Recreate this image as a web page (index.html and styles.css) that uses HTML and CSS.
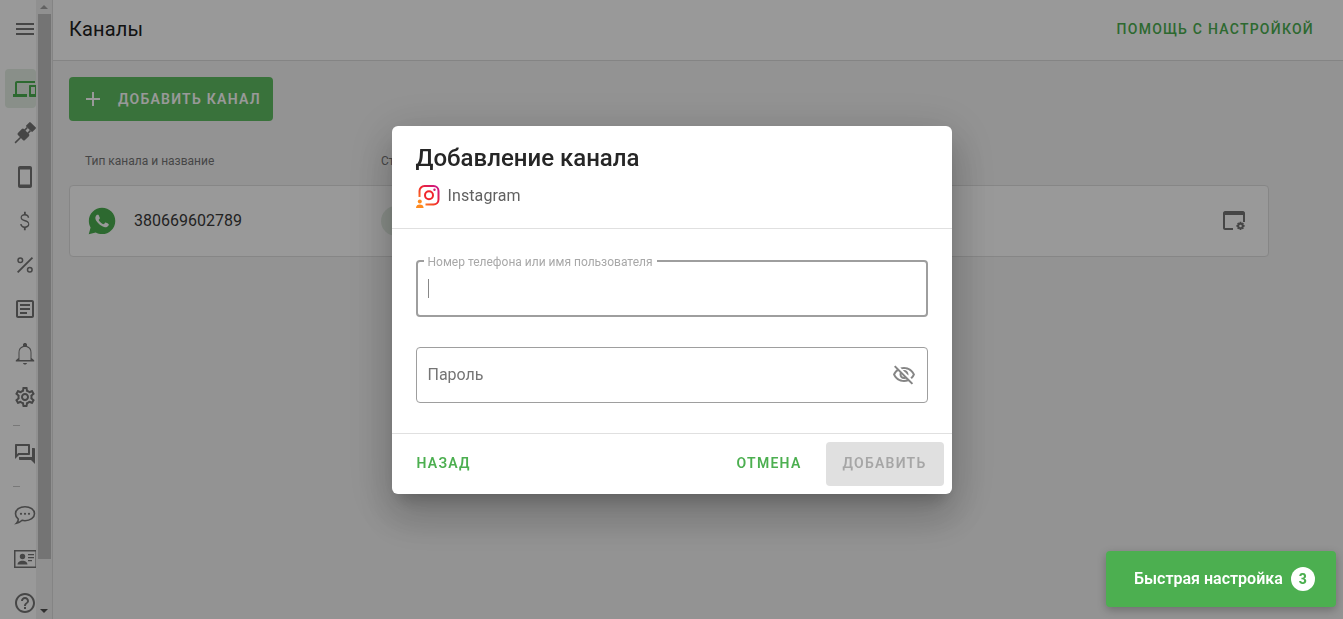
FILE: index.html
```html
<!DOCTYPE html>
<html>
	<head>
		<meta charset="utf-8">
		<title>Каналы</title>
		<link rel="stylesheet" href="styles.css">
	</head>
	<body>
		<div class="page">
			<div class="sidebar">
				<div class="nav">
					<div class="nav-menu">
						<svg class="ico" viewBox="0 0 24 24"><path d="M3 18h18v-2H3v2zm0-5h18v-2H3v2zm0-7v2h18V6H3z"/></svg>
					</div>
					<div class="nav-item nav-item-active">
						<svg class="ico" viewBox="0 0 24 24"><path d="M4 6h18V4H4c-1.1 0-2 .9-2 2v11H0v3h14v-3H4V6zm19 2h-6c-.55 0-1 .45-1 1v10c0 .55.45 1 1 1h6c.55 0 1-.45 1-1V9c0-.55-.45-1-1-1zm-1 9h-4v-7h4v7z"/></svg>
					</div>
					<div class="nav-item">
						<svg class="ico" viewBox="0 0 24 24"><g transform="rotate(45 12 12)"><rect x="7.500" y="0.500" width="9" height="6" rx="1"/><rect x="9" y="6.500" width="1.600" height="4"/><rect x="13.400" y="6.500" width="1.600" height="4"/><rect x="7" y="10" width="10" height="8.500" rx="1.500"/><rect x="11.200" y="18" width="1.600" height="8"/></g></svg>
					</div>
					<div class="nav-item">
						<svg class="ico" viewBox="0 0 24 24"><path d="M17 1H7C5.900 1 5 1.900 5 3v18c0 1.100.9 2 2 2h10c1.100 0 2-.9 2-2V3c0-1.100-.9-2-2-2zm0 18.500H7v-15h10v15z"/></svg>
					</div>
					<div class="nav-item">
						<svg class="ico" viewBox="0 0 24 24"><path d="M12.200 10.900c-2.300-.6-3.400-1.200-3.400-2.400 0-1.100 1-2 2.900-2 2 0 2.900.9 3 2.300h1.500c-.1-1.900-1.300-3.300-3.400-3.700V2.800h-1.800v2.300c-2 .4-3.400 1.700-3.400 3.500 0 2.200 1.800 3.100 4.300 3.800 2.600.7 3.300 1.500 3.300 2.700 0 1.200-1 2.300-3.200 2.300-2.200 0-3.200-1-3.300-2.400H7.200c.1 2.200 1.700 3.500 3.700 3.900v2.400h1.800v-2.400c2.100-.4 3.600-1.600 3.600-3.700 0-2.700-2.200-3.600-4.100-4.100z"/></svg>
					</div>
					<div class="nav-item">
						<svg class="ico" viewBox="0 0 24 24"><path d="M18.800 4l1.300 1.300L5.300 20.100 4 18.800 18.800 4z"/><circle class="ico-line" cx="7.300" cy="7.300" r="2.300"/><circle class="ico-line" cx="16.800" cy="16.800" r="2.300"/></svg>
					</div>
					<div class="nav-item">
						<svg class="ico" viewBox="0 0 24 24"><path d="M19 5v14H5V5h14m0-2H5c-1.100 0-2 .9-2 2v14c0 1.100.9 2 2 2h14c1.100 0 2-.9 2-2V5c0-1.100-.9-2-2-2z"/><path d="M14 17H7v-2h7v2zm3-4H7v-2h10v2zm0-4H7V7h10v2z"/></svg>
					</div>
					<div class="nav-item">
						<svg class="ico" viewBox="0 0 24 24"><path d="M12 23.500c1.100 0 2-.6 2-1.500h-4c0 .9.9 1.500 2 1.500zm6.500-6.500v-5.500c0-3.300-1.500-5.800-4.500-6.600V3.500c0-.9-.9-1.600-2-1.600s-2 .7-2 1.600v1.400c-3 .8-4.500 3.300-4.500 6.600V17l-2.700 2.300v1.200h18.400v-1.200L18.500 17zm-1 2H6.500v-7.500c0-3.100 2-5.500 5.500-5.500s5.500 2.400 5.500 5.500V19z"/></svg>
					</div>
					<div class="nav-item">
						<svg class="ico" viewBox="0 0 24 24"><path d="M19.430 12.980c.04-.32.07-.64.07-.98 0-.34-.03-.66-.07-.98l2.110-1.650c.19-.15.24-.42.12-.64l-2-3.460c-.09-.16-.26-.25-.44-.25-.06 0-.12.01-.17.03l-2.490 1c-.52-.4-1.080-.73-1.690-.98l-.38-2.650C14.460 2.180 14.250 2 14 2h-4c-.25 0-.46.18-.49.42l-.38 2.650c-.61.25-1.170.59-1.690.98l-2.490-1c-.06-.02-.12-.03-.18-.03-.17 0-.34.09-.43.25l-2 3.460c-.13.22-.07.49.12.64l2.110 1.650c-.04.32-.07.65-.07.98 0 .33.03.66.07.98l-2.110 1.650c-.19.15-.24.42-.12.64l2 3.460c.09.16.26.25.44.25.06 0 .12-.01.17-.03l2.490-1c.52.4 1.080.73 1.690.98l.38 2.650c.03.24.24.42.49.42h4c.25 0 .46-.18.49-.42l.38-2.650c.61-.25 1.170-.59 1.690-.98l2.490 1c.06.02.12.03.18.03.17 0 .34-.09.43-.25l2-3.460c.12-.22.07-.49-.12-.64l-2.110-1.650zm-1.980-1.710c.04.31.05.52.05.73 0 .21-.02.43-.05.73l-.14 1.130.89.7 1.080.84-.7 1.210-1.270-.51-1.040-.42-.9.68c-.43.32-.84.56-1.250.73l-1.060.43-.16 1.130-.2 1.350h-1.400l-.19-1.350-.16-1.130-1.060-.43c-.43-.18-.83-.41-1.230-.71l-.91-.7-1.060.43-1.270.51-.7-1.210 1.080-.84.89-.7-.14-1.130c-.03-.31-.05-.54-.05-.74s.02-.43.05-.73l.14-1.130-.89-.7-1.080-.84.7-1.210 1.270.51 1.040.42.9-.68c.43-.32.84-.56 1.250-.73l1.060-.43.16-1.130.2-1.350h1.390l.19 1.350.16 1.130 1.060.43c.43.18.83.41 1.230.71l.91.7 1.060-.43 1.270-.51.7 1.210-1.070.85-.89.7.14 1.130zM12 8c-2.210 0-4 1.790-4 4s1.790 4 4 4 4-1.790 4-4-1.790-4-4-4zm0 6c-1.100 0-2-.9-2-2s.9-2 2-2 2 .9 2 2-.9 2-2 2z"/></svg>
					</div>
					<div class="nav-sep"></div>
					<div class="nav-item">
						<svg class="ico" viewBox="0 0 24 24"><path d="M15 4v7H5.170L4 12.170V4h11m1-2H3c-.55 0-1 .45-1 1v14l4-4h10c.55 0 1-.45 1-1V3c0-.55-.45-1-1-1zm5 4h-2v9H6v2c0 .55.45 1 1 1h11l4 4V7c0-.55-.45-1-1-1z"/></svg>
					</div>
					<div class="nav-sep nav-sep-low"></div>
					<div class="nav-item">
						<svg class="ico" viewBox="0 0 24 24"><path class="ico-thin" d="M12 3.700c5.200 0 9.500 3 9.500 7s-4.300 7-9.500 7c-1 0-2-.1-2.900-.4-1 1-2.900 2.400-5.600 2.900 1.200-1.200 1.800-2.500 1.800-4C3.400 14.700 2.500 12.800 2.500 10.700c0-4 4.300-7 9.500-7z"/><circle cx="8" cy="10.800" r="1.100"/><circle cx="12" cy="10.800" r="1.100"/><circle cx="16" cy="10.800" r="1.100"/></svg>
					</div>
					<div class="nav-item">
						<svg class="ico-card" viewBox="0 0 23 18"><path d="M0 0h23v18H0V0zm1.500 1.500v15h20v-15h-20z"/><circle cx="8.500" cy="6.500" r="2.700"/><path d="M3.500 14.500c0-2.500 2.500-3.800 5-3.800s5 1.300 5 3.800h-10zM14 4h6v1.300h-6zM14 7h6v1.300h-6zM14 10h4v1.300h-4z"/></svg>
					</div>
					<div class="nav-item">
						<svg class="ico" viewBox="0 0 24 24"><path d="M11 18h2v-2h-2v2zm1-16C6.480 2 2 6.480 2 12s4.480 10 10 10 10-4.480 10-10S17.520 2 12 2zm0 18c-4.410 0-8-3.590-8-8s3.590-8 8-8 8 3.590 8 8-3.590 8-8 8zm0-14c-2.210 0-4 1.790-4 4h2c0-1.100.9-2 2-2s2 .9 2 2c0 2-3 1.750-3 5h2c0-2.250 3-2.500 3-5 0-2.210-1.790-4-4-4z"/></svg>
					</div>
				</div>
				<div class="scroll">
					<div class="scroll-up"></div>
					<div class="scroll-thumb"></div>
					<div class="scroll-down"></div>
				</div>
			</div>

			<div class="main">
				<div class="header">
					<div class="header-title">Каналы</div>
					<div class="header-link">ПОМОЩЬ С НАСТРОЙКОЙ</div>
				</div>
				<div class="content">
					<div class="add-btn">
						<svg class="ico-add" viewBox="0 0 24 24"><path d="M19 13h-6v6h-2v-6H5v-2h6V5h2v6h6v2z"/></svg>
						<span>ДОБАВИТЬ КАНАЛ</span>
					</div>
					<div class="table-head">
						<div class="col-name">Тип канала и название</div>
						<div>Статус</div>
					</div>
					<div class="row">
						<div class="row-name">
							<svg class="ico-wa" viewBox="0 0 24 24">
								<path class="wa-bubble" d="M12.040 2C6.580 2 2.130 6.450 2.130 11.910C2.130 13.660 2.590 15.360 3.450 16.860L2.050 22L7.300 20.620C8.750 21.410 10.380 21.830 12.040 21.830C17.500 21.830 21.950 17.380 21.950 11.920C21.950 9.270 20.920 6.780 19.050 4.910C17.180 3.030 14.690 2 12.040 2Z"/>
								<path class="wa-phone" d="M8.530 7.330C8.370 7.330 8.100 7.390 7.870 7.640C7.650 7.890 7 8.500 7 9.710C7 10.930 7.890 12.100 8 12.270C8.140 12.440 9.760 14.940 12.250 16C12.840 16.270 13.300 16.420 13.660 16.530C14.250 16.720 14.790 16.690 15.220 16.630C15.700 16.560 16.680 16.030 16.890 15.450C17.100 14.870 17.100 14.380 17.040 14.270C16.970 14.170 16.810 14.110 16.560 14C16.310 13.860 15.090 13.260 14.870 13.180C14.640 13.100 14.500 13.060 14.310 13.300C14.150 13.550 13.670 14.110 13.530 14.270C13.380 14.440 13.240 14.460 13 14.340C12.740 14.210 11.940 13.950 11 13.110C10.260 12.450 9.770 11.640 9.620 11.390C9.500 11.150 9.610 11 9.730 10.890C9.840 10.780 10 10.600 10.100 10.450C10.230 10.310 10.270 10.200 10.350 10.040C10.430 9.870 10.390 9.730 10.330 9.610C10.270 9.500 9.770 8.260 9.560 7.770C9.360 7.290 9.160 7.350 9 7.340C8.860 7.340 8.700 7.330 8.530 7.330Z"/>
							</svg>
							<span class="row-number">380669602789</span>
						</div>
						<div class="row-chip"></div>
						<svg class="ico-window" viewBox="0 0 24 24">
							<path d="M3 2h18c1 0 2 1 2 2v9h-2V6H3v13h8v2H3c-1 0-2-1-2-2V4c0-1 1-2 2-2z"/>
							<path d="M17.700 12.800h1.600l.3 1.300 1.200-.6 1.100 1.100-.6 1.200 1.300.3v1.600l-1.300.3.6 1.200-1.100 1.100-1.200-.6-.3 1.300h-1.600l-.3-1.300-1.200.6-1.100-1.100.6-1.200-1.300-.3v-1.600l1.300-.3-.6-1.200 1.100-1.100 1.200.6.3-1.300zm.8 2.900a1.300 1.300 0 1 0 0 2.600 1.300 1.300 0 0 0 0-2.600z"/>
						</svg>
					</div>
				</div>
			</div>
		</div>

		<div class="overlay">
			<div class="dialog">
				<div class="dialog-head">
					<div class="dialog-title">Добавление канала</div>
					<div class="dialog-type">
						<svg class="ico-insta" viewBox="0 0 24 24">
							<defs>
								<linearGradient id="instaGrad" x1="0" y1="1" x2="1" y2="0">
									<stop offset="0" stop-color="#ff9a1f"/>
									<stop offset=".5" stop-color="#f0262c"/>
									<stop offset="1" stop-color="#c9168f"/>
								</linearGradient>
							</defs>
							<path class="insta-frame" d="M3.500 13V7a5 5 0 0 1 5-5h9a5 5 0 0 1 5 5v8.500a5 5 0 0 1-5 5H9.500"/>
							<circle class="insta-lens" cx="13" cy="11.200" r="4"/>
							<circle class="insta-dot" cx="18.500" cy="5.700" r="1.200"/>
							<circle class="insta-person" cx="3.800" cy="17.500" r="2"/>
							<path class="insta-person" d="M0 24c0-2.500 1.700-3.500 3.800-3.500s3.800 1 3.800 3.500H0z"/>
						</svg>
						<span>Instagram</span>
					</div>
				</div>
				<div class="dialog-body">
					<div class="field field-focus">
						<label class="field-label">Номер телефона или имя пользователя</label>
						<div class="caret"></div>
					</div>
					<div class="field">
						<span class="field-hint">Пароль</span>
						<svg class="ico-eye" viewBox="0 0 24 24"><path d="M12 6c3.790 0 7.170 2.130 8.820 5.500-.59 1.220-1.420 2.270-2.410 3.120l1.410 1.410c1.390-1.230 2.490-2.770 3.180-4.530C21.270 7.110 17 4 12 4c-1.270 0-2.490.2-3.640.57l1.650 1.650C10.660 6.090 11.320 6 12 6zm-1.070 1.140L13 9.210c.57.25 1.030.71 1.280 1.280l2.070 2.070c.08-.34.14-.7.14-1.070C16.500 9.010 14.480 7 12 7c-.37 0-.72.05-1.070.14zM2.010 3.870l2.680 2.680C3.060 7.830 1.770 9.530 1 11.500 2.730 15.890 7 19 12 19c1.520 0 2.980-.29 4.320-.82l3.420 3.420 1.410-1.410L3.420 2.450 2.010 3.870zm7.500 7.500l2.610 2.610c-.04.01-.08.02-.12.02-1.380 0-2.500-1.120-2.500-2.500 0-.05.01-.08.01-.13zm-3.400-3.400l1.750 1.750c-.23.55-.36 1.150-.36 1.780 0 2.480 2.020 4.500 4.500 4.500.63 0 1.230-.13 1.770-.36l.98.98c-.88.24-1.800.38-2.750.38-3.790 0-7.170-2.130-8.820-5.500.7-1.430 1.720-2.610 2.930-3.530z"/></svg>
					</div>
				</div>
				<div class="dialog-foot">
					<div class="btn-text btn-back">НАЗАД</div>
					<div class="btn-text">ОТМЕНА</div>
					<div class="btn-disabled">ДОБАВИТЬ</div>
				</div>
			</div>
		</div>

		<div class="quick-setup">
			<span>Быстрая настройка</span>
			<span class="quick-count">3</span>
		</div>
	</body>
</html>
```

FILE: styles.css
```css
body
{
	margin: 0px;
	height: 619px;
	overflow: hidden;
	font-family: Roboto, "Liberation Sans", sans-serif;
	color: #212121;
	background-color: #F5F5F5;
}

.page
{
	display: flex;
	height: 619px;
}

/* left menu */
.sidebar
{
	display: flex;
	flex: none;
	width: 52px;
	height: 619px;
	overflow: hidden;
	background-color: #FFFFFF;
	border-right: 1px solid #DDDDDD;
}

.nav
{
	flex: none;
	width: 36px;
	overflow: hidden;
}

.nav-menu
{
	display: flex;
	justify-content: center;
	width: 50px;
	padding-top: 17px;
	height: 52px;
	box-sizing: border-box;
	margin-bottom: 17px;
}

.nav-item
{
	display: flex;
	flex: none;
	align-items: center;
	justify-content: center;
	width: 50px;
	height: 44px;
}

.nav-item-active
{
	width: 23px;
	height: 39px;
	margin-left: 5px;
	margin-bottom: 3px;
	border-radius: 4px;
	background-color: #E4EFE4;
	justify-content: flex-start;
	padding-left: 8px;
}

.nav-item-active .ico
{
	fill: #4CAF50;
}

.nav-sep
{
	width: 7px;
	height: 1px;
	margin: 6px 0px 6px 13px;
	background-color: #C8C8C8;
}

.nav-sep-low
{
	margin: 10px 0px 6px 13px;
}

.ico
{
	flex: none;
	width: 24px;
	height: 24px;
	fill: #757575;
}

.ico-line
{
	fill: none;
	stroke: #757575;
	stroke-width: 1.500;
}

.ico-thin
{
	fill: none;
	stroke: #757575;
	stroke-width: 1.600;
}

.ico-card
{
	flex: none;
	width: 23px;
	height: 18px;
	fill: #757575;
}

.scroll
{
	display: flex;
	flex: none;
	flex-direction: column;
	align-items: center;
	width: 16px;
	background-color: #F1F1F1;
}

.scroll-up
{
	flex: none;
	width: 0px;
	height: 0px;
	margin: 5px 0px 5px 0px;
	border-left: 4px solid transparent;
	border-right: 4px solid transparent;
	border-bottom: 4px solid #A3A3A3;
}

.scroll-thumb
{
	flex: none;
	width: 13px;
	height: 545px;
	background-color: #C1C1C1;
}

.scroll-down
{
	flex: none;
	width: 0px;
	height: 0px;
	margin-top: 50px;
	border-left: 4px solid transparent;
	border-right: 4px solid transparent;
	border-top: 4px solid #505050;
}

/* main area */
.main
{
	flex: 1;
	min-width: 0;
}

.header
{
	display: flex;
	align-items: center;
	justify-content: space-between;
	box-sizing: border-box;
	height: 61px;
	padding: 0px 29px 2px 16px;
	background-color: #FFFFFF;
	border-bottom: 1px solid #DDDDDD;
}

.header-title
{
	font-size: 20px;
	font-weight: 400;
	letter-spacing: 0.150px;
}

.header-link
{
	font-size: 14px;
	font-weight: 500;
	letter-spacing: 1.250px;
	color: #4CAF50;
}

.content
{
	padding: 16px 74px 0px 16px;
}

.add-btn
{
	display: flex;
	align-items: center;
	width: 204px;
	height: 44px;
	padding-left: 12px;
	box-sizing: border-box;
	border-radius: 4px;
	background-color: #5FBF63;
	font-size: 14px;
	font-weight: 600;
	letter-spacing: 1.250px;
	color: #FFFFFF;
}

.ico-add
{
	width: 24px;
	height: 24px;
	margin-right: 13px;
	fill: #FFFFFF;
}

.table-head
{
	display: flex;
	padding: 33px 0px 0px 16px;
	height: 15px;
	font-size: 12px;
	line-height: 15px;
	color: #757575;
}

.col-name
{
	width: 296px;
}

.row
{
	display: flex;
	align-items: center;
	box-sizing: border-box;
	height: 72px;
	margin-top: 16px;
	padding: 0px 22px 0px 18px;
	background-color: #FFFFFF;
	border: 1px solid #E0E0E0;
	border-radius: 4px;
}

.row-name
{
	display: flex;
	align-items: center;
	width: 293px;
	font-size: 16px;
}

.row-number
{
	padding-bottom: 2px;
	color: #3A3A3A;
}

.ico-wa
{
	width: 32px;
	height: 32px;
	margin-right: 16px;
	margin-left: -2px;
}

.wa-bubble
{
	fill: #4CAF50;
}

.wa-phone
{
	fill: #FFFFFF;
}

.row-chip
{
	width: 30px;
	height: 30px;
	border-radius: 50%;
	background-color: #E4EDE4;
}

.ico-window
{
	width: 24px;
	height: 24px;
	margin-left: auto;
	fill: #757575;
}

/* dialog */
.overlay
{
	position: fixed;
	top: 0px;
	left: 0px;
	right: 0px;
	bottom: 0px;
	display: flex;
	align-items: center;
	justify-content: center;
	background-color: rgba(0,0,0,.4);
}

.dialog
{
	width: 560px;
	height: 368px;
	border-radius: 6px;
	background-color: #FFFFFF;
	box-shadow: 0px 11px 15px -7px rgba(0,0,0,.2), 0px 24px 38px 3px rgba(0,0,0,.14), 0px 9px 46px 8px rgba(0,0,0,.12);
}

.dialog-head
{
	box-sizing: border-box;
	height: 103px;
	padding: 18px 24px 0px 24px;
	border-bottom: 1px solid #E0E0E0;
}

.dialog-title
{
	font-size: 24px;
	font-weight: 500;
	line-height: 28px;
	color: #262626;
}

.dialog-type
{
	display: flex;
	align-items: center;
	margin-top: 12px;
	font-size: 16px;
	letter-spacing: 0.100px;
	color: #616161;
}

.ico-insta
{
	width: 24px;
	height: 24px;
	margin-right: 8px;
}

.insta-frame
{
	fill: none;
	stroke: url(#instaGrad);
	stroke-width: 2;
}

.insta-lens
{
	fill: none;
	stroke: #F0262C;
	stroke-width: 2;
}

.insta-dot
{
	fill: #D5176F;
}

.insta-person
{
	fill: #FF8A1F;
}

.dialog-body
{
	box-sizing: border-box;
	height: 205px;
	padding: 31px 24px 0px 24px;
	border-bottom: 1px solid #E0E0E0;
}

.field
{
	position: relative;
	display: flex;
	align-items: center;
	justify-content: space-between;
	box-sizing: border-box;
	height: 56px;
	margin-bottom: 31px;
	padding: 0px 11px 0px 11px;
	border: 1px solid #9E9E9E;
	border-radius: 4px;
}

.field-focus
{
	height: 57px;
	margin-bottom: 30px;
	padding-left: 10px;
	border: 2px solid #9E9E9E;
}

.field-label
{
	position: absolute;
	top: -8px;
	left: 6px;
	padding: 0px 4px 0px 4px;
	background-color: #FFFFFF;
	font-size: 12px;
	line-height: 16px;
	color: #A8A8A8;
}

.caret
{
	width: 1px;
	height: 19px;
	background-color: #888888;
}

.field-hint
{
	font-size: 16px;
	color: #757575;
}

.ico-eye
{
	width: 24px;
	height: 24px;
	fill: #858585;
}

.dialog-foot
{
	display: flex;
	align-items: center;
	height: 59px;
	padding: 2px 8px 0px 25px;
	box-sizing: border-box;
	font-size: 14px;
	font-weight: 600;
	letter-spacing: 1.250px;
}

.btn-text
{
	margin-right: 24px;
	padding-bottom: 2px;
	color: #4CAF50;
}

.btn-back
{
	margin-right: auto;
}

.btn-disabled
{
	width: 118px;
	height: 44px;
	line-height: 42px;
	text-align: center;
	border-radius: 4px;
	background-color: #E0E0E0;
	color: #A6A6A6;
}

/* quick setup button */
.quick-setup
{
	position: fixed;
	right: 7px;
	bottom: 12px;
	display: flex;
	align-items: center;
	box-sizing: border-box;
	width: 230px;
	height: 56px;
	padding: 0px 0px 1px 28px;
	border-radius: 4px;
	background-color: #4CAF50;
	box-shadow: 0px 3px 8px rgba(0,0,0,.25);
	font-size: 16px;
	font-weight: 600;
	color: #FFFFFF;
}

.quick-count
{
	flex: none;
	width: 24px;
	height: 24px;
	margin-left: 8px;
	border-radius: 50%;
	background-color: #FFFFFF;
	font-size: 14px;
	font-weight: 800;
	line-height: 24px;
	text-align: center;
	color: #4CAF50;
}
```
